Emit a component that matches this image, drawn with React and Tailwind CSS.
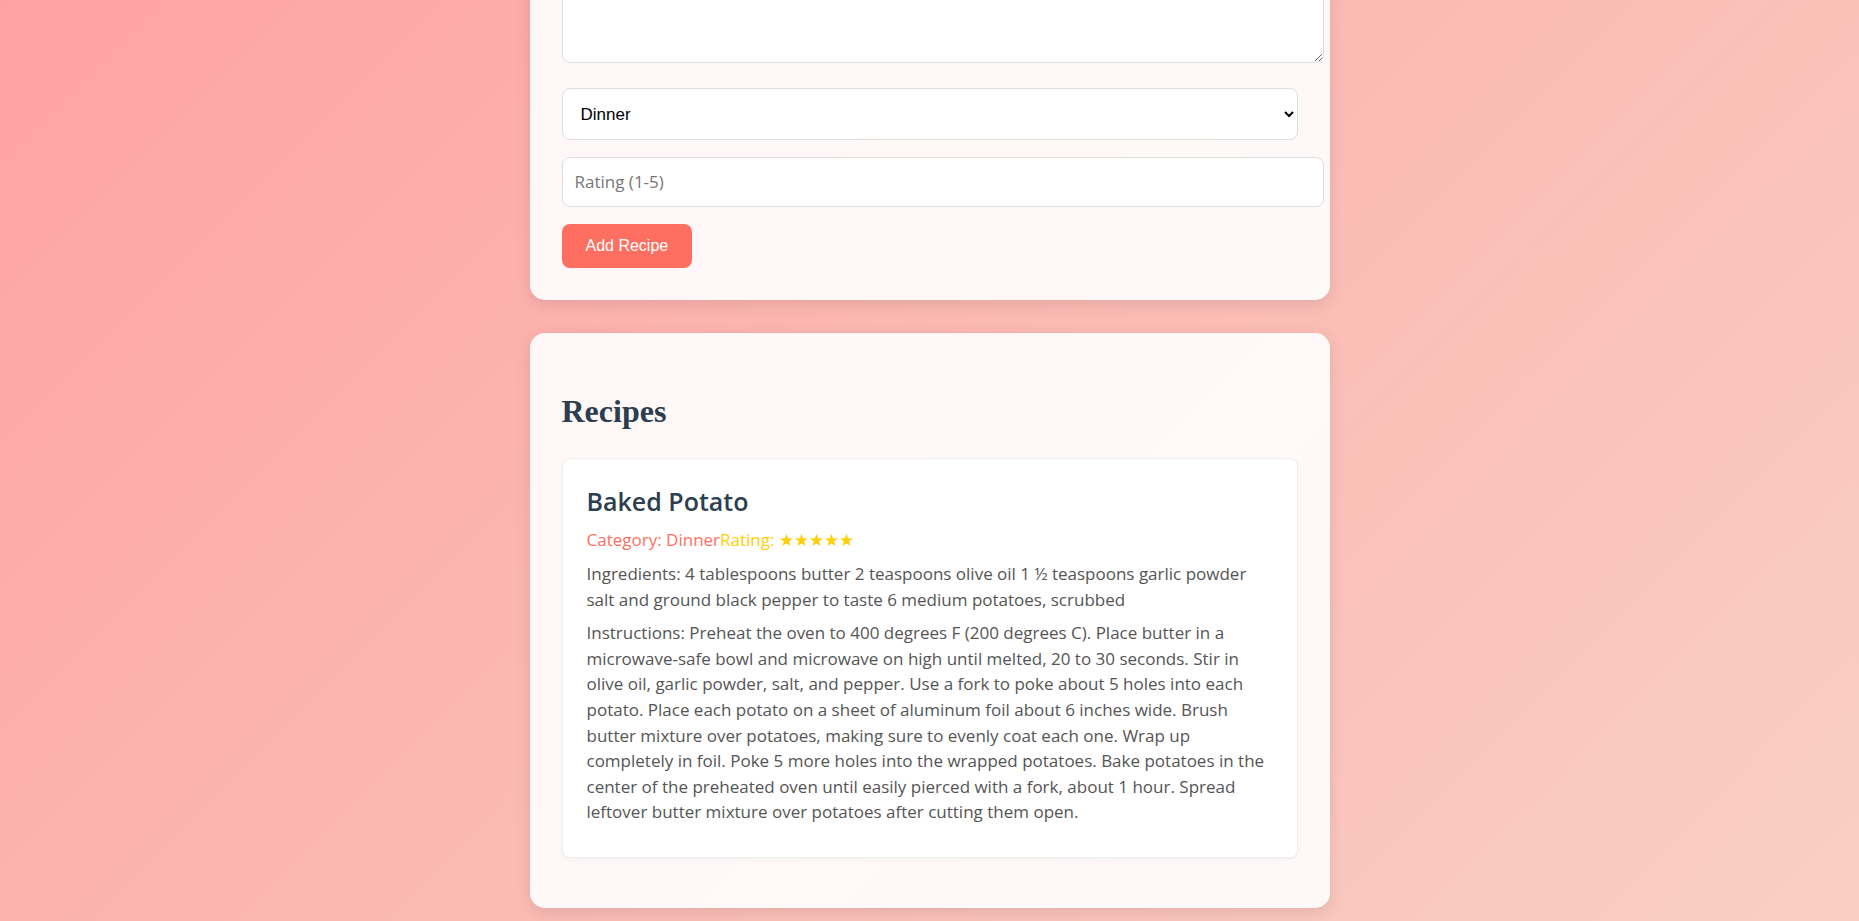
import React from 'react';

const recipe = {
  name: 'Baked Potato',
  category: 'Dinner',
  rating: 5,
  ingredients:
    '4 tablespoons butter 2 teaspoons olive oil 1 ½ teaspoons garlic powder salt and ground black pepper to taste 6 medium potatoes, scrubbed',
  instructions:
    'Preheat the oven to 400 degrees F (200 degrees C). Place butter in a microwave-safe bowl and microwave on high until melted, 20 to 30 seconds. Stir in olive oil, garlic powder, salt, and pepper. Use a fork to poke about 5 holes into each potato. Place each potato on a sheet of aluminum foil about 6 inches wide. Brush butter mixture over potatoes, making sure to evenly coat each one. Wrap up completely in foil. Poke 5 more holes into the wrapped potatoes. Bake potatoes in the center of the preheated oven until easily pierced with a fork, about 1 hour. Spread leftover butter mixture over potatoes after cutting them open.',
};

const fieldCls =
  'box-content w-full px-3 py-3 bg-white border border-[#ddd] rounded-lg text-[17px] leading-6 text-[#333] placeholder:text-[#777] outline-none';

export default function App() {
  return (
    <div className="h-[921px] overflow-hidden flex flex-col justify-end bg-[linear-gradient(135deg,#ffa2a5_0%,#fbb8b2_45%,#f9cfc4_100%)] font-['Open_Sans',sans-serif]">
      <div className="w-[800px] mx-auto pb-[13px] flex flex-col gap-[33px]">
        {/* Add recipe form (top part scrolled out of view) */}
        <div className="bg-white/90 rounded-[15px] p-8 shadow-[0_4px_15px_rgba(0,0,0,0.1)]">
          <h2 className="font-['Liberation_Serif',serif] font-bold text-[32px] leading-10 text-[#2c3e50] mb-6">
            Add a Recipe
          </h2>
          <div className="flex flex-col items-start">
            <input className={`${fieldCls} mb-[17px]`} placeholder="Recipe Name" />
            <textarea className={`${fieldCls} h-[100px] mb-[17px]`} placeholder="Ingredients" />
            <textarea className={`${fieldCls} h-[100px] mb-[25px]`} placeholder="Instructions" />
            <select
              defaultValue="Dinner"
              className="w-full h-[52px] px-[14px] bg-white border border-[#ddd] rounded-lg text-[17px] text-black font-['Liberation_Sans',Arial,sans-serif] mb-[17px] outline-none"
            >
              <option>Breakfast</option>
              <option>Lunch</option>
              <option>Dinner</option>
              <option>Dessert</option>
            </select>
            <input className={`${fieldCls} mb-[17px]`} placeholder="Rating (1-5)" />
            <button className="h-[44px] px-6 bg-[#ff6f61] text-white rounded-lg text-base font-['Liberation_Sans',Arial,sans-serif]">
              Add Recipe
            </button>
          </div>
        </div>

        {/* Recipe list */}
        <div className="bg-white/90 rounded-[15px] p-8 shadow-[0_4px_15px_rgba(0,0,0,0.1)]">
          <h2 className="font-['Liberation_Serif',serif] font-bold text-[32px] leading-[41px] text-[#2c3e50] mt-[26px] mb-[26px]">
            Recipes
          </h2>
          <div className="bg-white border border-[#eee] rounded-lg p-6 mb-[18px] shadow-[0_2px_5px_rgba(0,0,0,0.04)]">
            <h3 className="text-[25px] leading-9 font-semibold text-[#2c3e50]">{recipe.name}</h3>
            <p className="my-2 text-[17px] leading-[25.6px]">
              <span className="text-[#ff6f61]">Category: {recipe.category}</span>
              <span className="text-[#ffcf00]">Rating: {'★'.repeat(recipe.rating)}</span>
            </p>
            <p className="my-2 text-[17px] leading-[25.6px] text-[#555]">Ingredients: {recipe.ingredients}</p>
            <p className="my-2 text-[17px] leading-[25.6px] text-[#555]">Instructions: {recipe.instructions}</p>
          </div>
        </div>
      </div>
    </div>
  );
}
